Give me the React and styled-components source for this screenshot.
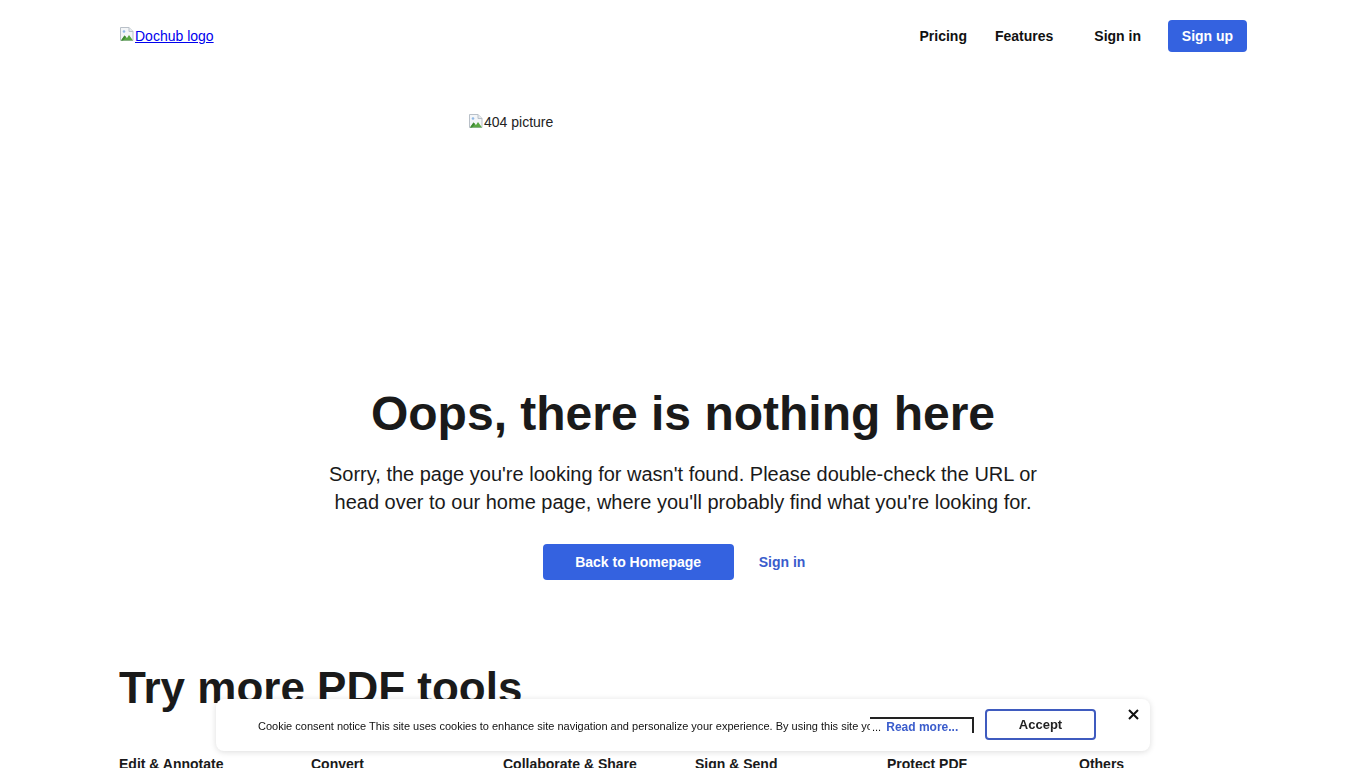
import styled, { createGlobalStyle } from "styled-components";

const GlobalStyle = createGlobalStyle`
    body {
        margin: 0;
        background: #ffffff;
        font-family: "Liberation Sans", Arial, sans-serif;
        color: #1a1a1a;
    }
`

function BrokenImage() {
    return (
        <svg width="16" height="16" viewBox="0 0 16 16">
            <path d="M1.5 1.5h8.5l4 4v9h-12.5z" fill="#f4f6f8" stroke="#b9c0c8" />
            <path d="M10 1.5v4h4" fill="#e6eaee" stroke="#b9c0c8" />
            <path d="M2 14.5l3.5-5 2.5 2.5 2-3 4 5.5z" fill="#5aa844" />
            <path d="M2 14.5l3.5-5 1.5 1.5-3 3.5z" fill="#3f8b35" />
            <circle cx="5" cy="5.5" r="1.3" fill="#8fb8e6" />
        </svg>
    )
}

export default function App() {
    const tools = ["Edit & Annotate", "Convert", "Collaborate & Share", "Sign & Send", "Protect PDF", "Others"]

    return (
        <>
            <GlobalStyle />
            <Page>
                <Header>
                    <LogoLink href="/">
                        <BrokenImage />
                        <span>Dochub logo</span>
                    </LogoLink>
                    <Nav>
                        <NavLink href="/">Pricing</NavLink>
                        <NavLink href="/">Features</NavLink>
                        <NavLink href="/" $wide>Sign in</NavLink>
                        <SignUp href="/">Sign up</SignUp>
                    </Nav>
                </Header>

                <Hero>
                    <Picture>
                        <BrokenImage />
                        <span>404 picture</span>
                    </Picture>
                    <Title>Oops, there is nothing here</Title>
                    <Lead>
                        Sorry, the page you're looking for wasn't found. Please double-check the URL or
                        head over to our home page, where you'll probably find what you're looking for.
                    </Lead>
                    <Actions>
                        <PrimaryButton href="/">Back to Homepage</PrimaryButton>
                        <TextLink href="/">Sign in</TextLink>
                    </Actions>
                </Hero>

                <Tools>
                    <ToolsTitle>Try more PDF tools</ToolsTitle>
                    <ToolColumns>
                        {tools.map((t) => (
                            <ToolColumn key={t}>{t}</ToolColumn>
                        ))}
                    </ToolColumns>
                </Tools>
            </Page>

            <Cookie>
                <CookieText>
                    Cookie consent notice This site uses cookies to enhance site navigation and personalize your experience. By using this site you agree to our cookie policy.
                </CookieText>
                <ReadMore>
                    ... <a href="/">Read more...</a>
                </ReadMore>
                <AcceptButton>Accept</AcceptButton>
                <Close aria-label="close">
                    <svg width="11" height="11" viewBox="0 0 11 11">
                        <path d="M1 1l9 9M10 1l-9 9" stroke="#111" strokeWidth="2" />
                    </svg>
                </Close>
            </Cookie>
        </>
    )
}

const Page = styled.div`
    width: 1128px;
    margin: 0 auto;
    height: 768px;
    overflow: hidden;
`

const Header = styled.header`
    height: 72px;
    display: flex;
    align-items: center;
    justify-content: space-between;
`

const LogoLink = styled.a`
    display: flex;
    align-items: center;
    font-size: 14px;
    color: #0000ee;
    text-decoration: underline;

    svg{
        margin-top: -4px;
    }
`

const Nav = styled.nav`
    display: flex;
    align-items: center;
`

const NavLink = styled.a`
    font-size: 14px;
    font-weight: 700;
    color: #111;
    text-decoration: none;
    margin-right: ${(p) => (p.$wide ? "27px" : "28px")};
    margin-left: ${(p) => (p.$wide ? "13px" : "0")};
`

const SignUp = styled.a`
    display: flex;
    align-items: center;
    justify-content: center;
    width: 79px;
    height: 32px;
    border-radius: 4px;
    background: #3462e0;
    color: #fff;
    font-size: 14px;
    font-weight: 700;
    text-decoration: none;
`

const Hero = styled.section`
    display: flex;
    flex-direction: column;
    align-items: center;
`

const Picture = styled.div`
    width: 430px;
    height: 240px;
    margin-top: 42px;
    display: flex;
    align-items: flex-start;
    font-size: 14px;
    color: #222;

    svg{
        margin-top: -1px;
    }
`

const Title = styled.h1`
    margin: 32px 0 0;
    font-size: 48px;
    line-height: 56px;
    font-weight: 700;
    color: #1a1a1a;
`

const Lead = styled.p`
    margin: 18px 0 0;
    width: 720px;
    text-align: center;
    font-size: 20px;
    line-height: 28px;
    color: #1a1a1a;
`

const Actions = styled.div`
    margin-top: 28px;
    display: flex;
    align-items: center;
    gap: 25px;
    margin-left: 2px;
`

const PrimaryButton = styled.a`
    display: flex;
    align-items: center;
    justify-content: center;
    width: 191px;
    height: 36px;
    border-radius: 4px;
    background: #3462e0;
    color: #fff;
    font-size: 14px;
    font-weight: 700;
    text-decoration: none;
`

const TextLink = styled.a`
    font-size: 14px;
    font-weight: 700;
    color: #3a5ccc;
    text-decoration: none;
    padding-right: 20px;
`

const Tools = styled.section`
    margin-top: 80px;
`

const ToolsTitle = styled.h2`
    margin: 0;
    font-size: 44px;
    line-height: 56px;
    font-weight: 700;
    color: #1a1a1a;
`

const ToolColumns = styled.div`
    margin-top: 40px;
    display: grid;
    grid-template-columns: repeat(6, 1fr);
    gap: 24px;
`

const ToolColumn = styled.div`
    font-size: 14px;
    font-weight: 700;
    color: #1a1a1a;
`

const Cookie = styled.div`
    position: fixed;
    left: 216px;
    top: 699px;
    width: 934px;
    height: 52px;
    box-sizing: border-box;
    background: #fff;
    border-radius: 8px;
    box-shadow: 0 1px 6px rgba(0, 0, 0, 0.14);
    display: flex;
    align-items: center;
    padding-left: 42px;
`

const CookieText = styled.div`
    width: 612px;
    white-space: nowrap;
    overflow: hidden;
    font-size: 11px;
    color: #111;
    margin-top: 2px;
`

const ReadMore = styled.div`
    box-sizing: border-box;
    width: 104px;
    height: 16px;
    margin-top: 18px;
    margin-bottom: 3px;
    border-top: 2px solid #222;
    border-right: 2px solid #222;
    font-size: 11px;
    color: #111;
    line-height: 16px;
    padding-left: 2px;
    white-space: nowrap;
    align-self: flex-start;

    a{
        font-size: 12px;
        font-weight: 700;
        color: #3a5ccc;
        text-decoration: none;
        margin-left: 2px;
    }
`

const AcceptButton = styled.button`
    margin-left: 11px;
    width: 111px;
    height: 31px;
    box-sizing: border-box;
    border: 2px solid #3f5bbf;
    border-radius: 4px;
    background: #fff;
    font-family: "Liberation Sans", Arial, sans-serif;
    font-size: 13px;
    font-weight: 700;
    color: #222;
    margin-top: -2px;
`

const Close = styled.button`
    position: absolute;
    top: 10px;
    right: 11px;
    border: none;
    background: none;
    padding: 0;
    display: flex;
`
